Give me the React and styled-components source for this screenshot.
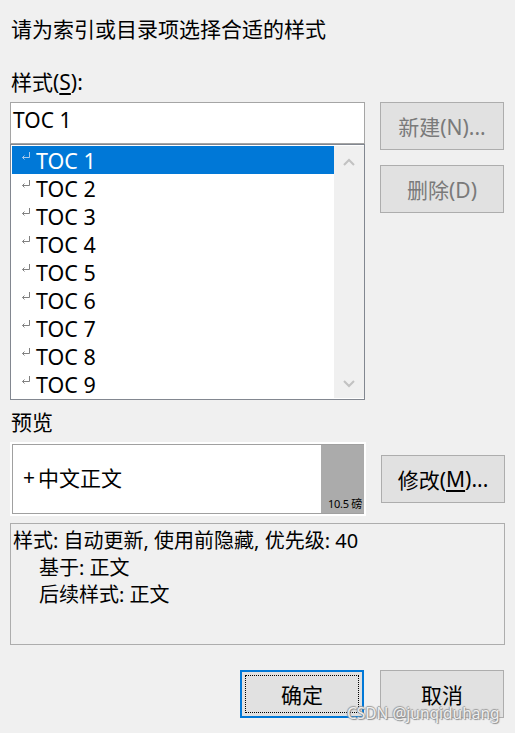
import React from 'react';
import styled, { createGlobalStyle } from 'styled-components';

const GlobalStyle = createGlobalStyle`
  html, body {
    margin: 0;
    padding: 0;
    background: #f0f0f0;
  }
  body {
    font-family: "Noto Sans", "Noto Sans CJK SC", sans-serif;
    color: #000;
  }
`;

const tocItems = ['TOC 1', 'TOC 2', 'TOC 3', 'TOC 4', 'TOC 5', 'TOC 6', 'TOC 7', 'TOC 8', 'TOC 9'];

const Dialog = styled.div`
  position: relative;
  width: 515px;
  height: 733px;
  box-sizing: border-box;
  padding: 0 10px 0 10px;
  background: #f0f0f0;
  display: flex;
  flex-direction: column;
  overflow: hidden;
`;

const Label = styled.div`
  margin-top: ${(p) => p.top}px;
  padding-left: 1px;
  font-size: 21px;
  line-height: 28px;
  height: 28px;
  white-space: nowrap;

  u {
    text-underline-offset: 3px;
  }
`;

const Row = styled.div`
  margin-top: ${(p) => p.top}px;
  display: flex;
  align-items: ${(p) => (p.center ? 'center' : 'flex-start')};
  gap: 15px;
`;

const LeftCol = styled.div`
  width: 355px;
  display: flex;
  flex-direction: column;
`;

const RightCol = styled.div`
  display: flex;
  flex-direction: column;
  gap: 15px;
`;

const TextBox = styled.div`
  height: 42px;
  box-sizing: border-box;
  border: 1px solid #a5a5a5;
  background: #fff;
  padding: 0 2px;
  font-size: 21px;
  line-height: 34px;
`;

const ListBox = styled.div`
  height: 256px;
  box-sizing: border-box;
  border: 1px solid #828790;
  background: #fff;
  padding: 1px 0 1px 1px;
  display: flex;
`;

const Items = styled.div`
  flex: 1;
  display: flex;
  flex-direction: column;
`;

const Item = styled.div`
  height: 28px;
  display: flex;
  align-items: center;
  padding-left: 9px;
  gap: 5px;
  background: ${(p) => (p.selected ? '#0078d7' : '#fff')};
  color: ${(p) => (p.selected ? '#fff' : '#000')};
  font-size: 21.5px;

  svg {
    align-self: flex-start;
    margin-top: 6px;
    flex: none;
  }
`;

const ScrollBar = styled.div`
  width: 30px;
  background: #f0f0f0;
  display: flex;
  flex-direction: column;
  justify-content: space-between;
  align-items: center;
  padding: 12px 0 10px;
`;

const Button = styled.div`
  width: ${(p) => p.w || 124}px;
  height: 48px;
  box-sizing: border-box;
  border: ${(p) => (p.focused ? '2px solid #0078d7' : '1px solid #adadad')};
  background: #e1e1e1;
  color: ${(p) => (p.disabled ? '#7a7a7a' : '#000')};
  font-size: 21px;
  display: flex;
  align-items: center;
  justify-content: center;
  position: relative;
  white-space: nowrap;

  u {
    text-underline-offset: 3px;
  }
`;

const FocusRect = styled.div`
  position: absolute;
  inset: 3px;
  border: 1px dotted #000;
`;

const PreviewFrame = styled.div`
  width: 356px;
  height: 74px;
  box-sizing: border-box;
  background: #fff;
  padding: 2px;
`;

const PreviewInner = styled.div`
  height: 100%;
  box-sizing: border-box;
  border: 1px solid #a0a0a0;
  border-right: none;
  display: flex;
`;

const PreviewText = styled.div`
  flex: 1;
  padding-left: 10px;
  font-size: 21px;
  display: flex;
  align-items: center;
  gap: 3px;
  padding-bottom: 4px;
`;

const SizeColumn = styled.div`
  width: 43px;
  background: #ababab;
  display: flex;
  align-items: flex-end;
  justify-content: flex-end;
  padding: 0 2px 1px 0;
  box-sizing: border-box;
  font-size: 11px;
  line-height: 16px;
  white-space: nowrap;
  letter-spacing: -0.3px;
`;

const Description = styled.div`
  margin-top: ${(p) => p.top}px;
  width: 495px;
  height: 122px;
  box-sizing: border-box;
  border: 1px solid #adadad;
  padding: 3px 2px;
  font-size: 20px;
  line-height: 27px;
`;

const DescLine = styled.div`
  padding-left: ${(p) => (p.indent ? 26 : 0)}px;
  white-space: nowrap;
`;

const Footer = styled.div`
  margin-top: ${(p) => p.top}px;
  display: flex;
  justify-content: flex-end;
  gap: 16px;
  padding-right: 1px;
`;

const Watermark = styled.div`
  position: absolute;
  left: 347px;
  top: 702px;
  font-family: "Noto Sans", sans-serif;
  font-size: 15.5px;
  color: rgba(255, 255, 255, 0.85);
  text-shadow: 1px 1px 1px #8a8a8a, -1px 0 1px #9a9a9a, 0 -1px 1px #9a9a9a;
  white-space: nowrap;
`;

const ReturnMark = ({ color }) => (
  <svg width="10" height="8" viewBox="0 0 10 8">
    <path d="M8.5 0 V5.5 H1.5 M1.5 5.5 L3.5 3.5 M1.5 5.5 L3.5 7.5" fill="none" stroke={color} strokeWidth="1" />
  </svg>
);

const Chevron = ({ up }) => (
  <svg width="12" height="8" viewBox="0 0 12 8">
    <path d={up ? 'M1 7 L6 2 L11 7' : 'M1 1 L6 6 L11 1'} fill="none" stroke="#c2c2c2" strokeWidth="2" />
  </svg>
);

const App = () => {
  return (
    <Dialog>
      <GlobalStyle />
      <Label top={15}>请为索引或目录项选择合适的样式</Label>
      <Label top={25}>
        样式(<u>S</u>):
      </Label>

      <Row top={6}>
        <LeftCol>
          <TextBox>TOC 1</TextBox>
          <ListBox>
            <Items>
              {tocItems.map((name, i) => (
                <Item key={name} selected={i === 0}>
                  <ReturnMark color={i === 0 ? '#a9c9ea' : '#808080'} />
                  {name}
                </Item>
              ))}
            </Items>
            <ScrollBar>
              <Chevron up />
              <Chevron />
            </ScrollBar>
          </ListBox>
        </LeftCol>
        <RightCol>
          <Button disabled>新建(N)...</Button>
          <Button disabled>删除(D)</Button>
        </RightCol>
      </Row>

      <Label top={8}>预览</Label>

      <Row top={6} center>
        <PreviewFrame>
          <PreviewInner>
            <PreviewText>
              <span>+</span>
              <span>中文正文</span>
            </PreviewText>
            <SizeColumn>10.5 磅</SizeColumn>
          </PreviewInner>
        </PreviewFrame>
        <Button>
          修改(<u>M</u>)...
        </Button>
      </Row>

      <Description top={7}>
        <DescLine>样式: 自动更新, 使用前隐藏, 优先级: 40</DescLine>
        <DescLine indent>基于: 正文</DescLine>
        <DescLine indent>后续样式: 正文</DescLine>
      </Description>

      <Footer top={25}>
        <Button focused>
          <FocusRect />
          确定
        </Button>
        <Button>取消</Button>
      </Footer>

      <Watermark>CSDN @junqiduhang</Watermark>
    </Dialog>
  );
};

export default App;
